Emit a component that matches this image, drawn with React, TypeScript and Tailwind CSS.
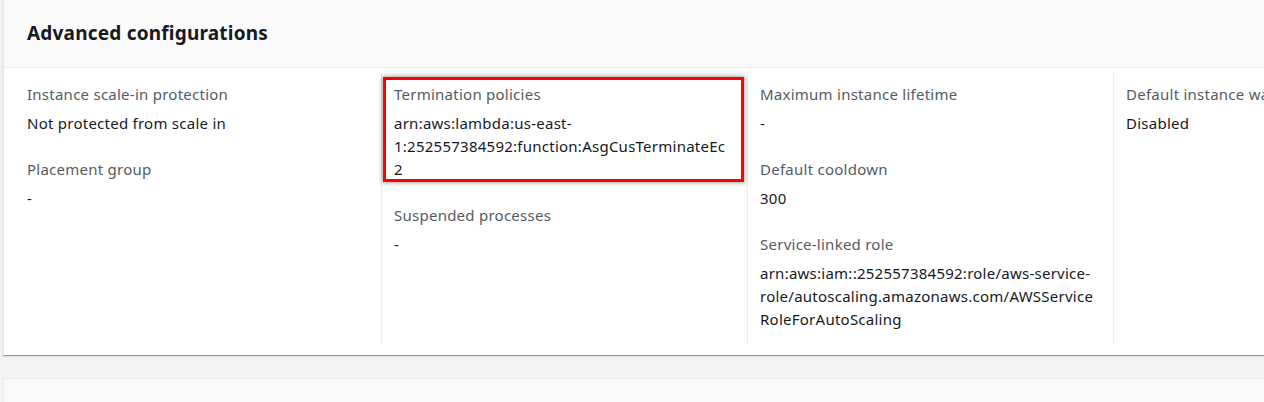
const fields: { label: string; value: string; highlight?: boolean }[][] = [
  [
    { label: 'Instance scale-in protection', value: 'Not protected from scale in' },
    { label: 'Placement group', value: '-' },
  ],
  [
    { label: 'Termination policies', value: 'arn:aws:lambda:us-east-1:252557384592:function:AsgCusTerminateEc2', highlight: true },
    { label: 'Suspended processes', value: '-' },
  ],
  [
    { label: 'Maximum instance lifetime', value: '-' },
    { label: 'Default cooldown', value: '300' },
    { label: 'Service-linked role', value: 'arn:aws:iam::252557384592:role/aws-service-role/autoscaling.amazonaws.com/AWSServiceRoleForAutoScaling' },
  ],
  [{ label: 'Default instance warmup', value: 'Disabled' }],
];

const App = () => {
  return (
    <div className="w-[1264px] h-[402px] overflow-hidden bg-[#f2f3f3] pl-[3px] font-['Noto_Sans',sans-serif] text-[15px] leading-[23px] tracking-[0.25px]">
      {/* Advanced configurations card */}
      <div className="w-[1500px] bg-white border-l border-[#eaeded] shadow-[0_1px_1px_0_rgba(0,28,36,0.3),1px_1px_1px_0_rgba(0,28,36,0.15)]">
        <div className="h-[68px] bg-[#fafafa] border-b border-[#eaeded] flex items-center px-[23px]">
          <h2 className="text-[19px] font-bold text-[#16191f] tracking-[0.2px]">Advanced configurations</h2>
        </div>
        <div className="grid grid-cols-[366px_366px_366px_366px] pl-[11px] pt-[5px] pb-[11px]">
          {fields.map((col, i) => (
            <div
              key={i}
              className={`pl-[12px] pr-[16px] pt-[10px] pb-[10px] min-h-[271px] flex flex-col gap-[23px] ${i > 0 ? 'border-l border-[#eaeded]' : ''}`}
            >
              {col.map((f) => (
                <div key={f.label} className="relative">
                  <div className="text-[#545b64]">{f.label}</div>
                  <div className="mt-[6px] text-[#16191f] [overflow-wrap:anywhere]">{f.value}</div>
                  {f.highlight && (
                    <div className="absolute left-[-11px] right-[-13px] top-[-6px] bottom-[-1px] border-[3px] border-[#ff0000] shadow-[0_0_4px_1px_rgba(0,0,0,0.35)] pointer-events-none" />
                  )}
                </div>
              ))}
            </div>
          ))}
        </div>
      </div>

      {/* Next card */}
      <div className="mt-[23px] w-[1500px] h-[40px] bg-[#fafafa] border-l border-t border-[#eaeded]" />
    </div>
  );
};

export default App;
